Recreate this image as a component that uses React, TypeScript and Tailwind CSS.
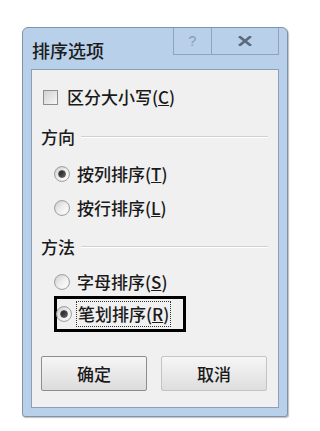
import React from "react";

const font = { fontFamily: '"Noto Sans CJK SC", "Noto Sans", sans-serif' };

function Radio({ checked }: { checked?: boolean }) {
  return (
    <span className="flex h-[16px] w-[16px] shrink-0 items-center justify-center rounded-full border border-[#a2a2a2] bg-gradient-to-br from-[#cfcfcf] via-[#efefef] to-[#ffffff] shadow-[inset_0_0_1px_rgba(0,0,0,0.2)]">
      {checked && (
        <span className="h-[8px] w-[8px] rounded-full border border-[#555] bg-gradient-to-br from-[#1c1c1c] to-[#606060]" />
      )}
    </span>
  );
}

export default function App() {
  return (
    <div className="min-h-[431px] w-[314px] bg-white pl-[22px] pt-[27px]" style={font}>
      <div className="flex h-[390px] w-[266px] flex-col rounded-t-[6px] rounded-b-[3px] border border-[#8193a6] bg-[#b8d0e9] shadow-[1px_1px_1px_rgba(0,0,0,0.25)]">
        {/* title bar */}
        <div className="flex h-[41px] items-start">
          <div className="flex-1 pl-[9px] pt-[12px] text-[18px] font-medium leading-[20px] text-[#1c1c1c]">排序选项</div>
          <div className="mr-[8px] flex h-[27px]">
            <div className="flex w-[39px] items-center justify-center border-x border-b border-[#8ca5bf] text-[14px] text-[#8a9bb0]" style={{ fontFamily: '"Liberation Sans", sans-serif' }}>
              ?
            </div>
            <div className="flex w-[67px] items-center justify-center border-r border-b border-[#8ca5bf]">
              <svg width="14" height="10" viewBox="0 0 14 10">
                <path d="M2 1 L12 9 M12 1 L2 9" stroke="#5b6b7d" strokeWidth="2.6" strokeLinecap="square" />
              </svg>
            </div>
          </div>
        </div>
        {/* panel */}
        <div className="mx-[8px] mb-[8px] flex flex-1 flex-col border border-[#8aa0b8] bg-[#f0f0f0] px-[9px] pt-[17px] text-[17px] font-medium text-[#1a1a1a]">
          <div className="flex h-[20px] items-center gap-[9px] pl-[2px]">
            <span className="h-[15px] w-[15px] border border-[#8e8e8e] bg-gradient-to-br from-[#d0d0d0] to-[#f8f8f8]" />
            <span className="leading-[20px]">
              区分大小写(<span className="underline">C</span>)
            </span>
          </div>
          <div className="mt-[20px] flex h-[20px] items-center gap-[6px] pr-[1px]">
            <span className="leading-[20px]">方向</span>
            <span className="h-[2px] flex-1 border-t border-[#d0d0d0] bg-white" />
          </div>
          <div className="mt-[17px] flex h-[20px] items-center gap-[7px] pl-[13px]">
            <Radio checked />
            <span className="leading-[20px]">
              按列排序(<span className="underline">T</span>)
            </span>
          </div>
          <div className="mt-[14px] flex h-[20px] items-center gap-[7px] pl-[13px]">
            <Radio />
            <span className="leading-[20px]">
              按行排序(<span className="underline">L</span>)
            </span>
          </div>
          <div className="mt-[19px] flex h-[20px] items-center gap-[6px] pr-[1px]">
            <span className="leading-[20px]">方法</span>
            <span className="h-[2px] flex-1 border-t border-[#d0d0d0] bg-white" />
          </div>
          <div className="mt-[15px] flex h-[20px] items-center gap-[7px] pl-[13px]">
            <Radio />
            <span className="leading-[20px]">
              字母排序(<span className="underline">S</span>)
            </span>
          </div>
          <div className="ml-[13px] mt-[4px] flex h-[36px] w-[132px] items-center gap-[4px] border-[3px] border-black">
            <div className="-ml-[1px]">
              <Radio checked />
            </div>
            <span className="flex h-[26px] items-center border border-dotted border-[#333] px-[1px] leading-[20px]">
              笔划排序(<span className="underline">R</span>)
            </span>
          </div>
          <div className="mt-[24px] flex gap-[14px]">
            <button className="flex h-[35px] w-[106px] items-center justify-center rounded-[2px] border border-[#8d8d8d] bg-gradient-to-b from-[#f6f6f6] to-[#dcdcdc] text-[17px] font-medium text-[#1a1a1a]">
              确定
            </button>
            <button className="flex h-[35px] w-[106px] items-center justify-center rounded-[2px] border border-[#c4c4c4] bg-gradient-to-b from-[#f6f6f6] to-[#dedede] text-[17px] font-medium text-[#1a1a1a]">
              取消
            </button>
          </div>
        </div>
      </div>
    </div>
  );
}
